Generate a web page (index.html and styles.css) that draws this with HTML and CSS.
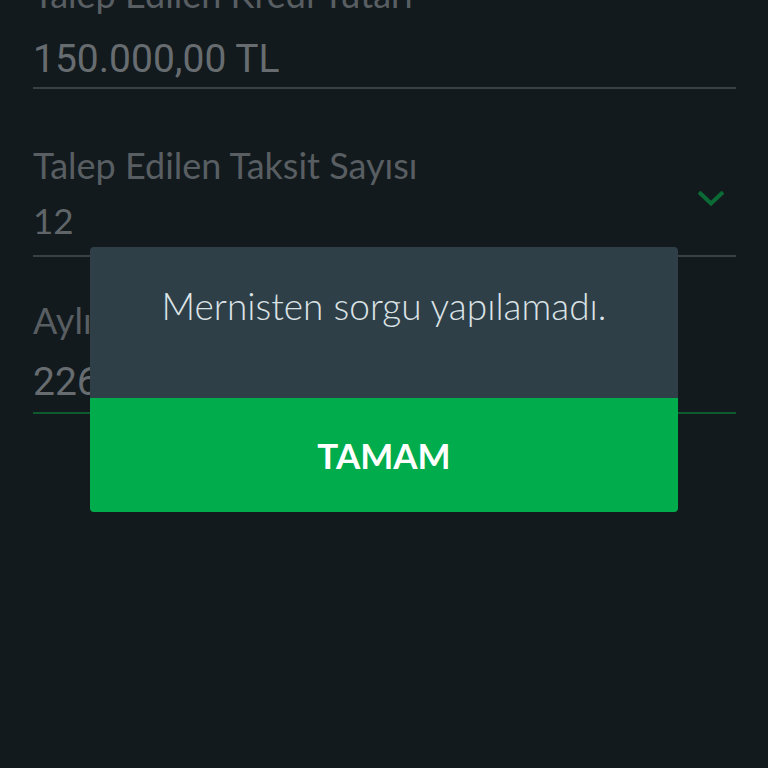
FILE: index.html
```html
<!DOCTYPE html>
<html lang="tr">
<head>
<meta charset="utf-8">
<title>Kredi Başvurusu</title>
<link rel="stylesheet" href="styles.css">
</head>
<body>
<main class="form">
  <div class="field field-first">
    <div class="label">Talep Edilen Kredi Tutarı</div>
    <div class="value value-input">150.000,00 TL</div>
  </div>
  <div class="field field-select">
    <div class="label">Talep Edilen Taksit Sayısı</div>
    <div class="select-row">
      <div class="value value-select">12</div>
      <svg class="chevron" width="26" height="16" viewBox="0 0 26 16" aria-hidden="true">
        <path d="M2.5 2.5 L13 12.5 L23.5 2.5" fill="none" stroke="#0b6a35" stroke-width="4" stroke-linecap="square"/>
      </svg>
    </div>
  </div>
  <div class="field field-focus">
    <div class="label">Aylık Taksit Tutarı</div>
    <div class="value value-input">226,45 TL</div>
  </div>
</main>

<div class="dialog" role="alertdialog">
  <div class="dialog-body">
    <p class="message">Mernisten sorgu yapılamadı.</p>
  </div>
  <button class="dialog-btn" type="button">TAMAM</button>
</div>
</body>
</html>
```

FILE: styles.css
```css
html, body {
  margin: 0;
  padding: 0;
  background: #131a1d;
  height: 100%;
  overflow: hidden;
}

body {
  font-family: Lato, "Open Sans", sans-serif;
}

.form {
  display: flex;
  flex-direction: column;
  padding: 0 32px 0 33px;
  margin-top: -26px;
}

.field {
  display: flex;
  flex-direction: column;
  border-bottom: 2px solid #394145;
}

.label {
  font-size: 36px;
  line-height: 40px;
  color: #585e62;
  white-space: nowrap;
}

.value {
  white-space: nowrap;
}

.value-input {
  font-family: Roboto, "Liberation Sans", sans-serif;
  font-size: 39px;
  line-height: 44px;
  color: #676c70;
}

.value-select {
  font-family: Lato, sans-serif;
  font-size: 35px;
  line-height: 40px;
  color: #5f6569;
}

.field-first .value {
  margin-top: 23px;
}
.field-first {
  padding-bottom: 6px;
}

.field-select {
  margin-top: 56px;
  padding-bottom: 15px;
}
.select-row {
  display: flex;
  align-items: flex-start;
  justify-content: space-between;
  margin-top: 15px;
}
.chevron {
  margin-top: -9px;
  margin-right: 12px;
}

.field-focus {
  margin-top: 43px;
  padding-bottom: 8px;
  border-bottom-color: #0d5a2e;
}
.field-focus .value {
  margin-top: 20px;
}

.dialog {
  position: absolute;
  left: 90px;
  top: 247px;
  width: 588px;
  border-radius: 4px;
  overflow: hidden;
  display: flex;
  flex-direction: column;
}

.dialog-body {
  background: #2e3f48;
  height: 151px;
  padding-top: 38px;
  box-sizing: border-box;
}

.message {
  margin: 0;
  text-align: center;
  font-size: 37px;
  font-weight: 300;
  line-height: 42px;
  color: #dce3e6;
}

.dialog-btn {
  height: 114px;
  border: 0;
  margin: 0;
  padding: 0;
  background: #00ac4b;
  color: #ffffff;
  font-family: Lato, sans-serif;
  font-weight: 700;
  font-size: 35px;
  letter-spacing: 0;
}
```
